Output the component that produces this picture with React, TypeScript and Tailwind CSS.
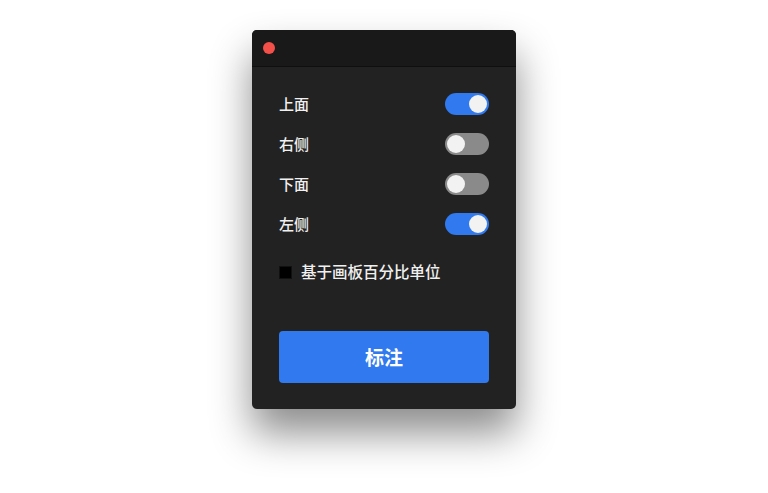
import React, { useState } from 'react';

const font = { fontFamily: '"Noto Sans CJK SC", "Noto Sans", sans-serif' };

const Toggle: React.FC<{ on: boolean; onChange: () => void }> = ({ on, onChange }) => (
  <button
    type="button"
    onClick={onChange}
    className={`relative h-[22px] w-[44px] rounded-full flex items-center px-[2px] ${
      on ? 'bg-[#3079ee] justify-end' : 'bg-[#8a8a8a] justify-start'
    }`}
  >
    <span className="h-[18px] w-[18px] rounded-full bg-[#f2f2f2]" />
  </button>
);

const App: React.FC = () => {
  const [sides, setSides] = useState([
    { label: '上面', on: true },
    { label: '右侧', on: false },
    { label: '下面', on: false },
    { label: '左侧', on: true },
  ]);
  const [percent, setPercent] = useState(false);

  const flip = (i: number) =>
    setSides(prev => prev.map((s, j) => (j === i ? { ...s, on: !s.on } : s)));

  return (
    <div className="min-h-screen bg-white flex justify-center pt-[30px]" style={font}>
      <div className="w-[264px] h-[379px] bg-[#222222] rounded-[5px] overflow-hidden flex flex-col shadow-[0_24px_40px_rgba(0,0,0,0.45)]">
        {/* title bar */}
        <div className="h-[37px] shrink-0 bg-[#191919] border-b border-[#0f0f0f] flex items-center px-[11px]">
          <span className="h-[12px] w-[12px] rounded-full bg-[#f4504a]" />
        </div>

        <div className="flex-1 flex flex-col px-[27px] pt-[26px] pb-[26px]">
          <div className="flex flex-col gap-[18px]">
            {sides.map((s, i) => (
              <div key={s.label} className="flex items-center justify-between h-[22px]">
                <span className="text-[15px] font-medium text-[#f0f0f0]">{s.label}</span>
                <Toggle on={s.on} onChange={() => flip(i)} />
              </div>
            ))}
          </div>

          <label className="mt-[28px] h-[18px] flex items-center gap-[9px] cursor-pointer">
            <input
              type="checkbox"
              checked={percent}
              onChange={e => setPercent(e.target.checked)}
              className="appearance-none h-[13px] w-[13px] bg-black border border-[#111]"
            />
            <span className="text-[15.5px] font-medium text-[#f0f0f0] leading-none">基于画板百分比单位</span>
          </label>

          <button
            type="button"
            className="mt-auto h-[52px] w-full rounded-[4px] bg-[#3079ee] text-white text-[19px] font-bold"
          >
            标注
          </button>
        </div>
      </div>
    </div>
  );
};

export default App;
